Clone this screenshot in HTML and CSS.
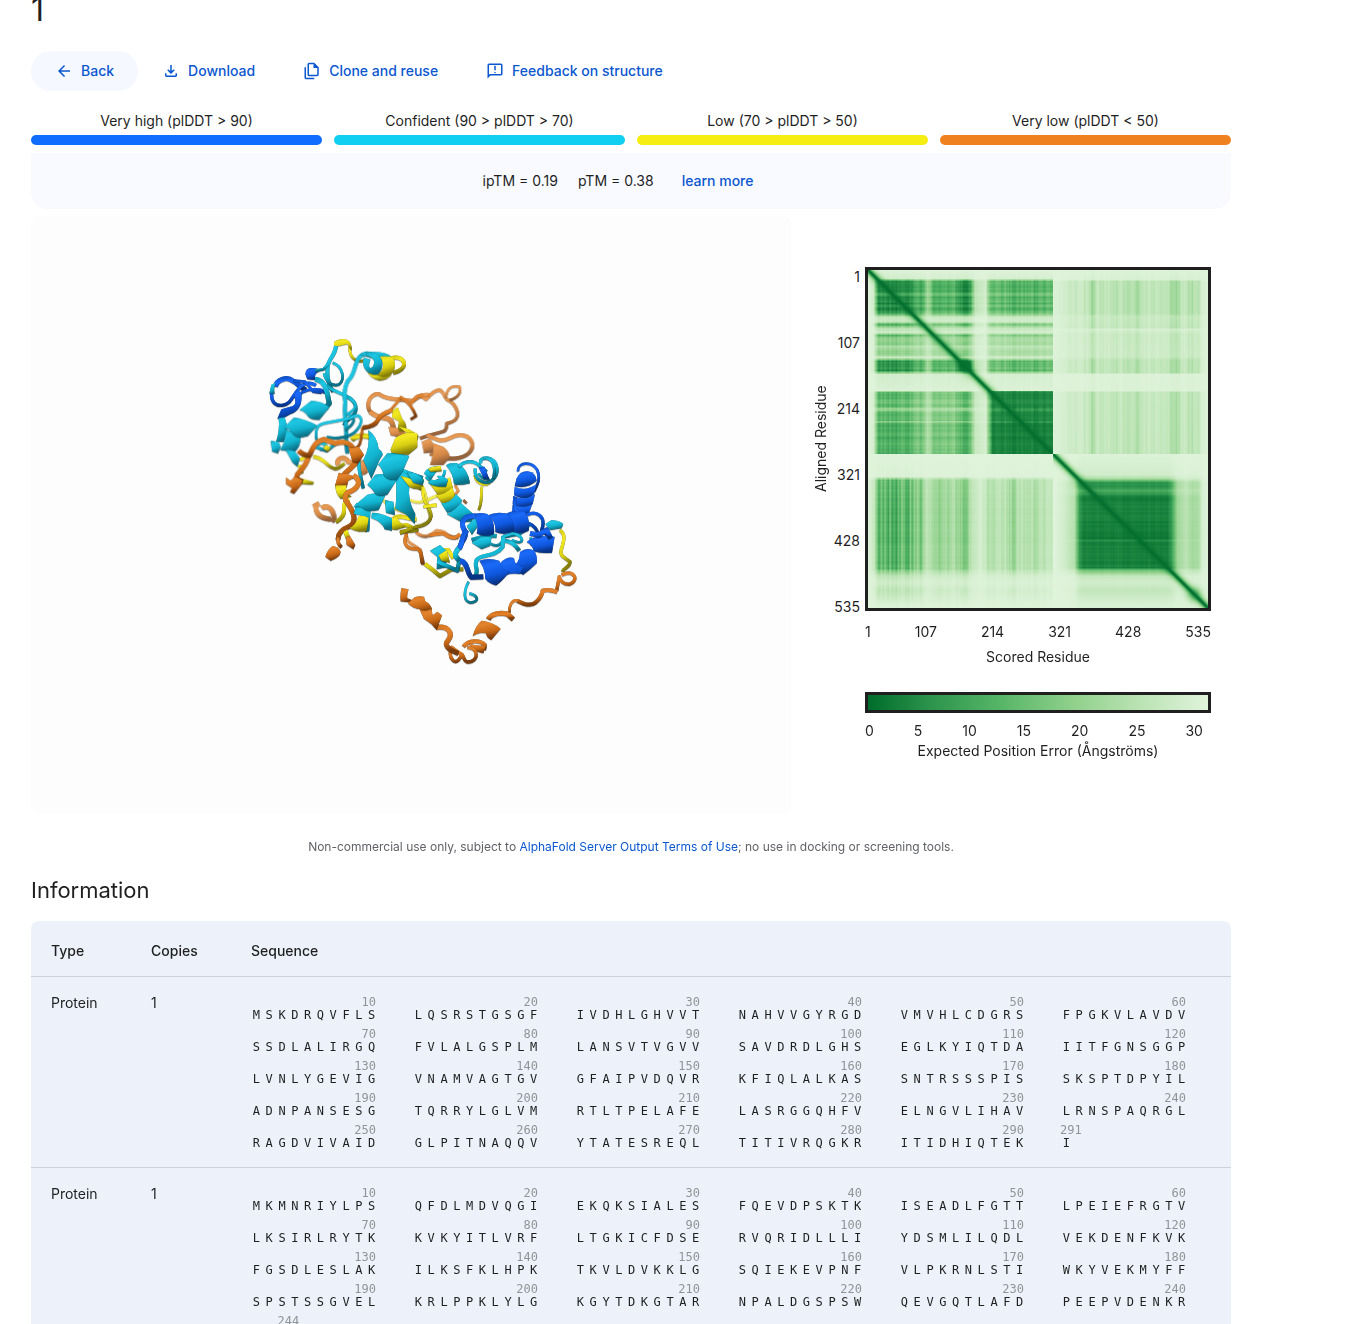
FILE: index.html
```html
<!DOCTYPE html>
<html lang="en">
<head>
<meta charset="utf-8">
<title>1 - AlphaFold Server</title>
<link rel="stylesheet" href="styles.css">
</head>
<body>
<main class="page">
  <h1 class="title">1</h1>

  <nav class="actions" aria-label="Result actions">
    <button class="action action-filled" type="button">
      <svg class="icon" viewBox="0 -960 960 960" aria-hidden="true"><path d="m313-440 224 224-57 56-320-320 320-320 57 56-224 224h487v80H313Z"/></svg>
      Back
    </button>
    <button class="action" type="button">
      <svg class="icon" viewBox="0 -960 960 960" aria-hidden="true"><path d="M480-320 280-520l56-58 104 104v-326h80v326l104-104 56 58-200 200ZM240-160q-33 0-56.5-23.5T160-240v-120h80v120h480v-120h80v120q0 33-23.5 56.5T720-160H240Z"/></svg>
      Download
    </button>
    <button class="action" type="button">
      <svg class="icon" viewBox="0 -960 960 960" aria-hidden="true"><path d="M760-200H320q-33 0-56.5-23.5T240-280v-560q0-33 23.5-56.5T320-920h280l240 240v400q0 33-23.5 56.5T760-200ZM560-640v-200H320v560h440v-360H560ZM160-40q-33 0-56.5-23.5T80-120v-560h80v560h440v80H160Z"/></svg>
      Clone and reuse
    </button>
    <button class="action" type="button">
      <svg class="icon" viewBox="0 -960 960 960" aria-hidden="true"><path d="M480-360q17 0 28.5-11.5T520-400q0-17-11.5-28.5T480-440q-17 0-28.5 11.5T440-400q0 17 11.5 28.5T480-360Zm-40-160h80v-240h-80v240ZM80-80v-720q0-33 23.5-56.5T160-880h640q33 0 56.5 23.5T880-800v480q0 33-23.5 56.5T800-240H240L80-80Zm126-240h594v-480H160v525l46-45Z"/></svg>
      Feedback on structure
    </button>
  </nav>

  <ul class="legend">
    <li class="legend-item very-high">Very high (plDDT &gt; 90)</li>
    <li class="legend-item confident">Confident (90 &gt; plDDT &gt; 70)</li>
    <li class="legend-item low">Low (70 &gt; plDDT &gt; 50)</li>
    <li class="legend-item very-low">Very low (plDDT &lt; 50)</li>
  </ul>

  <div class="scores">
    <span>ipTM = 0.19</span>
    <span>pTM = 0.38</span>
    <a class="learn" href="#learn">learn more</a>
  </div>

  <section class="results">
    <div class="viewer">
      <svg class="structure" viewBox="31 216 760 598" role="img" aria-label="Predicted protein structure">
        <defs>
          <linearGradient id="c" x1="0" y1="0" x2="0.35" y2="1"><stop offset="0" stop-color="#12a3bd"/><stop offset="0.3" stop-color="#1fc8e4"/><stop offset="0.65" stop-color="#12b3cf"/><stop offset="1" stop-color="#0a7288"/></linearGradient>
          <linearGradient id="b" x1="0" y1="0" x2="0.3" y2="1"><stop offset="0" stop-color="#0d4fca"/><stop offset="0.3" stop-color="#1b6af8"/><stop offset="0.65" stop-color="#0f58e0"/><stop offset="1" stop-color="#073386"/></linearGradient>
          <linearGradient id="y" x1="0" y1="0" x2="0.3" y2="1"><stop offset="0" stop-color="#d8ce16"/><stop offset="0.3" stop-color="#f4ea22"/><stop offset="0.65" stop-color="#d9cf12"/><stop offset="1" stop-color="#857e08"/></linearGradient>
          <linearGradient id="o" x1="0" y1="0" x2="0.3" y2="1"><stop offset="0" stop-color="#d67622"/><stop offset="0.3" stop-color="#e3832c"/><stop offset="0.65" stop-color="#c96a18"/><stop offset="1" stop-color="#7a3b0a"/></linearGradient>
        </defs>

        <!-- far strands, faded by depth -->
        <g class="ribbon far" transform="translate(260 330) scale(.3333)">
          <path class="os w14" d="M235,405C225,385 255,375 265,395L300,400L318,430"/>
          <path class="of" d="M300,390L325,392L320,430L296,440Z"/>
          <path class="os w12" d="M330,245C315,215 335,190 357,192C385,215 440,205 455,213C475,205 480,190 510,195"/>
          <path class="os w14" d="M330,245Q350,262 375,264T400,300L432,305"/>
          <path class="of" d="M385,290L438,296L430,325L392,316Z"/>
        </g>
        <g class="ribbon far" transform="translate(400 370) scale(.3333)">
          <path class="os w10" d="M30,105C45,85 50,75 62,76L78,88C95,75 95,62 118,60C130,62 130,75 140,88Q165,98 172,125T140,160Q142,182 125,186T60,205"/>
          <path class="os w8" d="M138,82C140,55 155,45 178,50C185,65 175,85 148,90"/>
          <path class="os w12" d="M80,195L115,210C150,215 150,195 180,195C215,195 225,225 210,245C195,265 160,270 120,262L90,250"/>
          <path class="of" d="M65,215L90,205Q104,222 105,245L72,250Z"/>
          <path class="of" d="M100,220L130,230Q148,244 150,262L130,285L90,285Q102,250 100,220Z"/>
          <path class="os w8" d="M165,345L175,362L160,380M190,390L200,400"/>
        </g>
        <g class="ribbon far" transform="translate(300 450) scale(.3333)">
          <path class="os w14" d="M40,170L58,160M48,165C45,195 65,205 92,208M65,175C85,160 100,180 103,205L95,215"/>
          <path class="os w8" d="M320,245Q318,272 332,280T362,300L372,345"/>
          <path class="os w10" d="M348,246C370,265 385,262 410,242Q428,242 440,252T475,262"/>
          <path class="ys w8" d="M330,150C360,165 380,150 415,135M250,150C280,190 330,175 345,215"/>
          <path class="ys w10" d="M340,90Q372,105 376,135T392,200Q388,225 345,230"/>
        </g>

        <!-- upper left lobe -->
        <g class="ribbon" transform="translate(260 330) scale(.3333)">
          <path class="ys w8" d="M268,50Q270,80 284,88T315,92"/>
          <path class="yf" d="M222,35Q236,26 250,27C268,27 277,42 275,62L262,42L238,48L222,52Z"/>
          <path class="cs w12" d="M228,48C226,75 206,85 203,110C200,140 205,165 220,185"/>
          <path class="cs w8" d="M218,98C250,108 256,150 236,164C212,170 196,150 192,130"/>
          <path class="cs w10" d="M200,165C215,190 285,190 288,235C290,260 255,270 252,285"/>
          <path class="cs w12" d="M325,70C280,72 292,120 270,145C255,160 250,190 256,215C250,250 262,290 258,330L262,370"/>
          <path class="cs w8" d="M260,200Q288,215 286,228T262,252Q285,262 280,275T255,300"/>
          <path class="cs w8" d="M170,330C162,285 180,280 210,276L270,265C306,240 312,275 290,300C275,320 230,330 200,320"/>
          <path class="cs w10" d="M165,350C190,320 215,360 180,358M165,350L200,362L235,335"/>
          <path class="ys w12" d="M392,85C440,72 448,120 400,128"/>
          <path class="yf" d="M322,126Q344,128 366,138L395,134Q380,152 358,151Q336,148 322,126Z"/>
          <path class="cf" d="M300,72Q320,62 345,66Q375,66 392,78L375,95L330,82Z"/>
          <path class="yf" d="M358,80Q380,76 398,82C412,100 404,132 384,138Q366,142 352,134C374,120 374,98 358,80Z"/>
          <path class="cf" d="M318,66C370,62 380,112 352,134C318,136 302,106 312,82L332,88C322,110 330,118 338,110C350,92 336,78 320,78Z"/>
          <path class="bs w14" d="M46,170C50,150 80,138 98,152C115,160 118,172 138,180"/>
          <path class="bs w10" d="M35,185C32,218 48,228 66,226C95,222 95,200 115,178C128,158 150,155 168,166"/>
          <path class="bs w8" d="M100,152L135,155L160,185L185,188M105,205Q125,180 160,178T190,190"/>
          <path class="bf" d="M136,132Q138,112 155,114Q175,112 178,124Q160,132 166,150L142,148Z"/>
          <path class="bf" d="M52,266L64,238L98,228C116,218 96,196 110,182L124,186C128,220 118,245 92,252L70,264Z"/>
          <path class="cf" d="M28,190L34,164L48,158Q40,170 44,192Z"/>
          <path class="cs w8" d="M165,122L190,118L205,100"/>
          <path class="cs w14" d="M165,148C202,152 200,190 208,220L195,235"/>
          <path class="cf" d="M56,264L74,262Q82,282 82,300L72,335L48,335Q60,300 56,264Z"/>
          <path class="cf" d="M76,300Q108,302 122,322Q122,350 104,366L60,360Q80,330 76,300Z"/>
          <path class="cf" d="M72,292L102,262Q135,266 172,286L144,318Q110,330 96,308Q90,296 72,292Z"/>
          <path class="cf" d="M118,240L154,212Q190,214 208,232L178,270Q150,270 142,256Q134,244 118,240Z"/>
          <path class="cf" d="M32,332L56,336L62,350L54,370L36,364Z"/>
          <path class="cf" d="M76,358Q96,358 106,366L120,385L112,410L98,398Z"/>
          <path class="ys w10" d="M120,390L145,378M118,405L126,430"/>
          <path class="yf" d="M114,442L162,456L158,464L108,460Z"/>
          <path class="os w14" d="M146,380Q138,405 118,426T128,455"/>
          <path class="of" d="M78,442L92,452L104,440L126,450L124,464L102,492L90,486L96,474L78,462Z"/>
          <path class="ys w10" d="M160,380C195,382 200,412 226,416C240,416 245,405 254,400"/>
          <path class="ys w14" d="M275,330C292,312 320,315 338,325"/>
          <path class="os w14" d="M116,362Q130,376 148,376C160,352 162,336 192,328L225,340C262,330 278,345 284,368"/>
          <path class="yf" d="M196,344L212,352L204,366L190,356Z"/>
          <path class="os w8" d="M284,355C308,350 302,310 308,294Q345,290 362,256L385,248L424,202"/>
          <path class="os w12" d="M308,292Q345,292 354,270T398,240"/>
          <path class="os w8" d="M420,200Q440,212 450,225T468,258L452,268"/>
          <path class="yf" d="M398,240L414,232Q420,250 428,268Q442,282 438,300L420,306Q410,292 418,274L396,262Z"/>
          <path class="yf" d="M415,290Q450,292 476,318L472,330L450,316Z"/>
        </g>

        <!-- centre -->
        <g class="ribbon" transform="translate(300 450) scale(.3333)">
          <path class="ys w12" d="M282,205C300,190 330,210 350,208M285,230L320,225L350,240L300,246"/>
          <path class="cs w10" d="M175,20L178,60L190,115M185,5C165,15 168,35 180,42"/>
          <path class="cf" d="M205,-60Q232,-40 236,-4Q248,4 248,14Q236,30 230,50L214,86L190,30Q212,-10 205,-60Z"/>
          <path class="yf" d="M262,205L290,200Q300,222 318,228L290,240L276,238Z"/>
          <path class="cf" d="M216,188Q246,188 276,205L276,242L254,238Q246,214 214,204Z"/>
          <path class="cf" d="M255,150L280,155L285,195L258,188Z"/>
          <path class="yf" d="M310,70Q345,76 372,88L362,122Q348,108 332,102Z"/>
          <path class="cf" d="M282,46Q320,62 370,78L366,98L330,90Q300,78 282,46Z"/>
          <path class="cf" d="M282,52Q306,60 312,66Q330,80 328,110Q322,150 346,192L344,222Q328,204 318,192L286,176Q294,110 282,52Z"/>
          <path class="os w14" d="M176,8Q178,34 150,56T112,110"/>
          <path class="of" d="M146,-5L176,-10L192,14L174,40L158,36Z"/>
          <path class="of" d="M106,104L116,68L142,72L168,80L145,92L140,112Z"/>
          <path class="yf" d="M106,106L140,106Q132,124 155,140L122,146Q106,130 106,106Z"/>
          <path class="ys w12" d="M148,148Q130,155 132,178T108,216"/>
          <path class="os w14" d="M160,76C190,95 172,118 142,128Q132,140 138,152C165,190 170,215 150,228C125,238 112,250 115,270"/>
          <path class="yf" d="M130,246L142,238L150,260L138,268Z"/>
          <path class="of" d="M138,262L150,258L166,285L160,298L140,284Z"/>
          <path class="os w10" d="M115,262Q110,280 125,292"/>
          <path class="of" d="M76,320Q82,298 98,288Q118,290 122,306Q120,322 92,332Z"/>
          <path class="cf" d="M168,160Q196,160 212,176L208,244L196,246L182,196L162,192Z"/>
          <path class="yf" d="M176,198Q194,196 206,204L200,244Q170,248 148,234Q166,228 176,198Z"/>
          <path class="cf" d="M166,164L202,134Q232,124 256,136L236,180Q200,188 188,174Q180,166 160,172Z"/>
          <path class="cf" d="M202,104L226,74Q262,68 294,84L262,134Q232,142 224,128Q216,114 202,104Z"/>
          <path class="cf" d="M234,44L262,10Q298,6 328,18L308,64L290,90Q258,92 250,72Q246,52 234,44Z"/>
          <path class="yf" d="M272,-2L286,-36Q318,-58 352,-50L352,-8L325,14Q298,12 275,8Z"/>
        </g>

        <!-- right middle helix and small rings -->
        <g class="ribbon" transform="translate(400 370) scale(.3333)">
          <path class="yf" d="M2,318Q40,326 70,345L65,358Q40,358 28,350Z"/>
          <path class="cf" d="M20,305Q50,305 72,330L68,346L40,338Z"/>
          <path class="ys w8" d="M68,350Q66,385 80,404T94,438Q88,468 40,472"/>
          <path class="ys w10" d="M0,490L35,475M70,410L110,405"/>
          <path class="cf" d="M72,310Q80,288 122,288L108,306L92,330Z"/>
          <path class="yf" d="M84,296Q100,286 122,288L125,304L92,306Z"/>
          <path class="cs w8" d="M78,320C90,340 130,342 135,300"/>
          <path class="yf" d="M84,334Q120,340 150,322L158,350L154,372Q130,384 118,380Z"/>
          <path class="cf" d="M84,338Q100,352 138,350L144,330Q130,314 110,318Q130,332 92,330Z"/>
          <path class="yf" d="M108,376Q140,372 156,352Q168,372 162,392Q140,404 128,402Z"/>
          <path class="cf" d="M124,400Q152,400 168,372L186,390Q180,412 172,420L142,428Z"/>
          <path class="cf" d="M140,432Q168,420 182,398L220,432L216,455L184,456Q166,446 140,432Z"/>
          <path class="cf" d="M138,286Q150,276 172,280Q204,296 210,340Q176,348 162,342Q160,310 138,286Z"/>
          <path class="cs w10" d="M175,290C195,270 222,270 240,288L260,305"/>
          <path class="ys w8" d="M224,315C230,345 260,350 270,335M246,350C240,375 250,390 236,420"/>
          <path class="cs w10" d="M226,295C222,330 250,345 275,332C300,312 296,270 262,264C245,262 238,272 244,280"/>
          <path class="cs w8" d="M250,265C285,262 286,300 280,325M236,310C242,325 258,330 268,325"/>
          <path class="bf" d="M236,292L254,290L268,328L252,326Z"/>
        </g>

        <!-- blue domain -->
        <g class="ribbon" transform="translate(400 370) scale(.3333)">
          <path class="cs w12" d="M215,510C245,500 270,495 290,498M310,500L360,490L390,460"/>
          <path class="bs w8" d="M354,304C352,276 395,272 412,300C422,325 414,342 402,365"/>
          <path class="bf" d="M350,325Q360,302 384,304Q408,308 410,332Q380,358 344,348Z"/>
          <path class="bf" d="M344,350Q376,366 410,342L402,372Q380,396 342,375Z"/>
          <path class="bf" d="M340,378Q376,394 405,372L398,402Q376,424 338,402Z"/>
          <path class="bf" d="M338,404Q370,416 396,404L386,432Q356,446 336,428Z"/>
          <path class="bs w10" d="M345,380C340,410 350,440 380,450M380,435C410,420 440,440 425,480L448,500M386,460Q410,470 415,495"/>
          <path class="bf" d="M318,432Q332,420 372,424Q392,446 386,482Q360,496 334,484Q344,456 318,432Z"/>
          <path class="bf" d="M264,436Q286,424 318,430Q346,448 340,486Q310,496 286,486Q290,456 264,436Z"/>
          <path class="bf" d="M208,438Q232,424 262,432Q286,450 282,492Q252,504 230,490Q240,456 208,438Z"/>
          <path class="bs w14" d="M226,438C198,436 178,450 192,478C205,500 185,510 180,530"/>
          <path class="cf" d="M200,468L225,445Q234,462 230,474L216,494Z"/>
          <path class="cf" d="M436,462L455,450Q480,452 490,462L485,475L450,480Z"/>
        </g>

        <!-- lower domain and tail -->
        <g class="ribbon" transform="translate(380 530) scale(.3333)">
          <path class="ys w10" d="M540,0C560,15 550,35 545,55C535,80 560,85 570,95C570,115 550,112 548,125"/>
          <path class="cf" d="M275,38L305,20L335,22L330,48L305,58Z"/>
          <path class="cs w8" d="M330,40C355,55 370,40 368,20L400,10M400,10C440,20 430,50 395,30M452,22L455,45"/>
          <path class="cs w12" d="M370,20L368,50C345,85 300,70 290,90C280,110 300,120 285,138"/>
          <path class="cs w12" d="M375,32Q400,34 418,62"/>
          <path class="ys w12" d="M135,102Q160,120 180,138L215,118L250,118M160,60L205,60L220,85"/>
          <path class="cf" d="M150,62L180,45L200,62L198,112L170,118L172,80Z"/>
          <path class="cs w12" d="M172,95L232,122L238,90L225,75"/>
          <path class="yf" d="M176,76L200,60L210,98L184,92Z"/>
          <path class="cs w14" d="M240,50Q222,68 228,80L238,92"/>
          <path class="bs w14" d="M262,0C240,20 250,40 238,55M240,92C265,95 260,130 275,142L310,140"/>
          <path class="bf" d="M440,36Q460,20 482,18L524,20L516,68Q484,72 462,64Q458,46 440,36Z"/>
          <path class="bf" d="M420,66Q440,50 464,62Q474,84 470,100Q450,120 430,134L388,116Q420,104 420,66Z"/>
          <path class="bf" d="M360,100Q380,78 402,84Q404,108 430,112L420,132Q400,128 380,134Q370,150 348,166L322,142Q356,130 360,100Z"/>
          <path class="bf" d="M298,92Q326,82 358,92Q362,120 390,126Q372,142 348,166Q326,160 316,146Q316,116 298,92Z"/>
          <path class="bs w14" d="M450,10L475,15L500,0L512,25"/>
          <path class="cs w8" d="M266,155C250,185 250,215 272,218C302,215 292,195 268,190"/>
          <path class="os w10" d="M80,12C65,45 85,60 112,56C130,65 120,85 128,102M150,15L190,10C215,28 225,28 240,12"/>
          <path class="os w10" d="M545,135C580,115 600,150 570,162C550,165 540,150 538,140L530,182"/>
          <path class="os w12" d="M532,186Q505,176 488,182Q484,204 466,218T412,212"/>
          <path class="os w8" d="M415,212C395,208 388,225 388,248"/>
          <path class="os w14" d="M325,268C335,248 365,248 382,252L400,268"/>
          <path class="of" d="M278,318Q288,284 305,272Q340,276 362,296L334,330Q320,324 318,310Q300,304 278,318Z"/>
          <path class="os w12" d="M250,350C265,330 300,328 315,345L312,360"/>
          <path class="of" d="M266,340Q290,350 318,345L310,370L282,362Z"/>
          <path class="os w10" d="M262,352C300,355 295,395 265,396C245,395 258,375 240,370L215,352Q205,375 218,390T248,370"/>
          <path class="os w14" d="M168,292C205,285 220,310 205,330C190,345 205,360 235,370"/>
          <path class="of" d="M64,174L86,178Q80,190 82,205Q96,208 100,218L62,214Q60,196 64,174Z"/>
          <path class="of" d="M84,220L104,202Q118,196 132,200L136,214Q152,222 156,238L148,252Q128,250 120,238Q100,236 84,220Z"/>
          <path class="of" d="M120,240Q140,246 154,236L158,256L172,245L186,256L170,300L154,282L132,266Z"/>
        </g>
      </svg>
    </div>

    <div class="pae">
      <div class="plot">
        <div class="y-title">Aligned Residue</div>
        <div class="y-ticks"><span>1</span><span>107</span><span>214</span><span>321</span><span>428</span><span>535</span></div>
        <canvas class="heatmap" id="heatmap" width="340" height="338" aria-label="Predicted aligned error"></canvas>
        <div class="x-axis">
          <div class="ticks"><span>1</span><span>107</span><span>214</span><span>321</span><span>428</span><span>535</span></div>
          <div class="axis-title">Scored Residue</div>
          <div class="scale"></div>
          <div class="ticks scale-ticks"><span>0</span><span>5</span><span>10</span><span>15</span><span>20</span><span>25</span><span>30</span></div>
          <div class="axis-title">Expected Position Error (Ångströms)</div>
        </div>
      </div>
    </div>
  </section>

  <p class="notice">Non-commercial use only, subject to <a href="#terms">AlphaFold Server Output Terms of Use</a>; no use in docking or screening tools.</p>

  <h2 class="subtitle">Information</h2>
  <table class="entities">
    <thead>
      <tr><th class="narrow">Type</th><th class="narrow">Copies</th><th>Sequence</th></tr>
    </thead>
    <tbody>
      <tr>
        <td>Protein</td><td>1</td>
        <td><div class="sequence" data-length="291">MSKDRQVFLS LQSRSTGSGF IVDHLGHVVT NAHVVGYRGD VMVHLCDGRS FPGKVLAVDV SSDLALIRGQ FVLALGSPLM LANSVTVGVV SAVDRDLGHS EGLKYIQTDA IITFGNSGGP LVNLYGEVIG VNAMVAGTGV GFAIPVDQVR KFIQLALKAS SNTRSSSPIS SKSPTDPYIL ADNPANSESG TQRRYLGLVM RTLTPELAFE LASRGGQHFV ELNGVLIHAV LRNSPAQRGL RAGDVIVAID GLPITNAQQV YTATESREQL TITIVRQGKR ITIDHIQTEK I</div></td>
      </tr>
      <tr>
        <td>Protein</td><td>1</td>
        <td><div class="sequence" data-length="244">MKMNRIYLPS QFDLMDVQGI EKQKSIALES FQEVDPSKTK ISEADLFGTT LPEIEFRGTV LKSIRLRYTK KVKYITLVRF LTGKICFDSE RVQRIDLLLI YDSMLILQDL VEKDENFKVK FGSDLESLAK ILKSFKLHPK TKVLDVKKLG SQIEKEVPNF VLPKRNLSTI WKYVEKMYFF SPSTSSGVEL KRLPPKLYLG KGYTDKGTAR NPALDGSPSW QEVGQTLAFD PEEPVDENKR</div></td>
      </tr>
    </tbody>
  </table>
</main>
<script src="script.js"></script>
</body>
</html>
```
FILE: styles.css
```css
* {
  box-sizing: border-box;
}

body {
  margin: 0;
  background: #fff;
  color: #1f1f1f;
  font: 14px/20px Inter, "Liberation Sans", sans-serif;
}

a {
  color: #0b57d0;
  text-decoration: none;
}

.page {
  height: 100vh;
  overflow-y: auto;
  scrollbar-width: none;
  padding: 0 31px;
}

.page > * {
  max-width: 1200px;
}

.title {
  margin: 0 0 31px;
  font-size: 32px;
  line-height: 20px;
  font-weight: 400;
}

.actions {
  display: flex;
  flex-wrap: wrap;
}

.action {
  display: flex;
  align-items: center;
  gap: 8px;
  height: 40px;
  padding: 0 24px;
  border: 0;
  border-radius: 20px;
  background: none;
  color: #0b57d0;
  font: inherit;
  font-weight: 500;
  cursor: pointer;
}

.action-filled {
  background: #f5f8ff;
}

.icon {
  width: 18px;
  height: 18px;
  fill: currentColor;
}

.legend {
  display: grid;
  grid-template-columns: repeat(4, 1fr);
  gap: 12px;
  margin: 20px 0 8px;
  padding: 0;
  list-style: none;
  text-align: center;
}

.legend-item::after {
  content: "";
  display: block;
  height: 10px;
  margin-top: 4px;
  border-radius: 5px;
  background: var(--level);
}

.very-high { --level: #106dff; }
.confident { --level: #10cff1; }
.low { --level: #f6ed12; }
.very-low { --level: #ef821e; }

.scores {
  display: flex;
  justify-content: center;
  gap: 20px;
  padding: 18px 26px 18px 0;
  border-radius: 0 0 16px 16px;
  background: #f8faff;
}

.learn {
  margin-left: 8px;
  font-weight: 500;
}

.results {
  display: grid;
  grid-template-columns: 19fr 11fr;
  margin-top: 7px;
}

.viewer {
  background: #fdfdfd;
  border-radius: 8px;
}

.structure {
  display: block;
  width: 100%;
}

.ribbon path {
  fill: none;
  stroke-linejoin: round;
  filter: drop-shadow(0 1px 1px rgba(0, 0, 0, .7));
}

.far { opacity: .8; }

.ribbon .cs { stroke: url(#c); }
.ribbon .bs { stroke: url(#b); }
.ribbon .ys { stroke: url(#y); }
.ribbon .os { stroke: url(#o); }
.ribbon .cf { fill: url(#c); }
.ribbon .bf { fill: url(#b); }
.ribbon .yf { fill: url(#y); }
.ribbon .of { fill: url(#o); }
.w8 { stroke-width: 8px; }
.w10 { stroke-width: 10px; }
.w12 { stroke-width: 12px; }
.w14 { stroke-width: 15px; }

.pae {
  padding: 51px 20px 0 22px;
}

.plot {
  display: grid;
  grid-template-columns: 16px 31px 1fr;
}

.y-title {
  writing-mode: vertical-rl;
  transform: rotate(180deg);
  text-align: center;
  line-height: 16px;
}

.y-ticks {
  display: flex;
  flex-direction: column;
  justify-content: space-between;
  margin-bottom: -6px;
  text-align: right;
}

.heatmap {
  display: block;
  width: calc(100% - 5px);
  margin-left: 5px;
  border: 3px solid #1f1f1f;
}

.x-axis {
  grid-column: 3;
  margin-left: 5px;
  padding-top: 11px;
}

.ticks {
  display: flex;
  justify-content: space-between;
}

.axis-title {
  margin-top: 5px;
  text-align: center;
}

.scale {
  height: 21px;
  margin: 25px 0 8px;
  border: 3px solid #1f1f1f;
  background: linear-gradient(90deg, #006d2c, #2b934b 18%, #54b466 38%, #8fd08b 60%, #bae3b3 80%, #e0f3db);
}

.scale-ticks {
  padding-right: 8px;
}

.scale-ticks + .axis-title {
  margin-top: 0;
}

.notice {
  margin: 23px 0 19px;
  color: #5f6368;
  font-size: 12px;
  text-align: center;
}

.subtitle {
  margin: 0 0 17px;
  font-size: 22px;
  line-height: 28px;
  font-weight: 400;
}

.entities {
  width: 100%;
  border-spacing: 0;
  border-radius: 8px 8px 0 0;
  background: #edf2fa;
  text-align: left;
}

.entities th {
  padding: 20px 0 15px 20px;
  font-weight: 500;
}

.entities .narrow {
  width: 100px;
}

.entities td {
  padding: 16px 0 17px 20px;
  border-top: 1px solid #cbd2de;
  vertical-align: top;
}

.sequence {
  display: grid;
  grid-template-columns: repeat(6, 128px);
  gap: 5px 34px;
  margin: 2px 0 0 -1px;
  font: 12px/13px "DejaVu Sans Mono", "Liberation Mono", monospace;
}

.block {
  display: grid;
  grid-template-columns: repeat(10, minmax(0, 1fr));
  text-align: center;
}

.position {
  padding-right: 2px;
  color: #909499;
  line-height: 14px;
  text-align: right;
}

.residue {
  grid-row: 2;
  height: 13px;
}
```
FILE: script.js
```js
// Sequence blocks: ten residues each, numbered above the last one.
document.querySelectorAll('.sequence').forEach((box) => {
  const residues = box.textContent.replace(/\s/g, '');
  const total = Number(box.dataset.length);
  box.textContent = '';
  for (let start = 0; start < total; start += 10) {
    const end = Math.min(start + 10, total);
    const block = document.createElement('div');
    block.className = 'block';
    const position = document.createElement('span');
    position.className = 'position';
    position.style.gridColumn = '1 / ' + (end - start + 1);
    position.textContent = end;
    block.append(position);
    for (let i = start; i < end; i++) {
      const residue = document.createElement('span');
      residue.className = 'residue';
      residue.textContent = residues[i] || '';
      block.append(residue);
    }
    box.append(block);
  }
});

// Predicted aligned error map.
const canvas = document.getElementById('heatmap');
const ctx = canvas.getContext('2d');
const W = canvas.width, H = canvas.height, SPLIT_X = 185, SPLIT_Y = 184;

// Piecewise-linear profile through [position, value] pairs.
function profile(points, size) {
  const out = new Float32Array(size);
  let k = 0;
  for (let i = 0; i < size; i++) {
    while (k < points.length - 2 && i >= points[k + 1][0]) k++;
    const [x0, v0] = points[k], [x1, v1] = points[k + 1];
    out[i] = v0 + (v1 - v0) * Math.min(1, (i - x0) / Math.max(1, x1 - x0));
  }
  return out;
}

let seed = 7;
function random() {
  seed = (seed * 16807) % 2147483647;
  return seed / 2147483647;
}
function stripes(size) {
  const raw = Array.from({ length: size + 2 }, random);
  return Array.from({ length: size }, (_, i) => (raw[i] + raw[i + 1]) - 1);
}
const noiseX = stripes(W), noiseY = stripes(H);

const rowTop = profile([[0,.02],[8,.08],[11,.85],[21,.85],[24,.6],[27,.85],[42,.82],[47,.14],[51,.15],[54,.62],[58,.2],[62,.08],[65,.58],[69,.35],[74,.45],[76,.28],[83,.45],[87,.12],[91,.78],[100,.82],[104,.08],[120,.03],[122,.58],[136,.56],[138,.32],[140,.4],[142,.6],[150,.58],[151,.4],[153,.64],[184,.66]], H);
const colTop = profile([[0,0],[5,.1],[10,1],[43,1],[47,.78],[55,.8],[59,.4],[62,.5],[65,.74],[86,.75],[91,.95],[102,.98],[107,.2],[117,.1],[122,.65],[150,.72],[185,.68]], W);
const rowRight = profile([[0,.02],[9,.05],[11,.25],[43,.25],[46,.16],[57,.19],[59,.07],[64,.15],[86,.13],[90,.23],[102,.23],[104,.03],[120,.03],[122,.2],[184,.21]], H);
const colRight = profile([[0,0],[185,.1],[195,.3],[208,.5],[220,.7],[224,1.3],[228,.7],[246,.8],[249,1.3],[252,.7],[266,.9],[269,1.2],[273,.6],[300,.65],[303,1.4],[310,1.1],[314,.6],[322,1],[330,.8],[334,.2],[340,.05]], W);
const rowLow = profile([[0,0],[184,.01],[206,.05],[210,.9],[250,1],[298,.95],[301,.6],[306,.28],[312,.14],[320,.3],[326,.2],[334,.05],[338,.03]], H);
const colLow = profile([[0,.02],[6,.15],[10,.58],[44,.6],[46,.46],[54,.46],[58,.2],[64,.26],[70,.36],[85,.3],[92,.42],[102,.34],[106,.15],[112,.06],[120,.22],[128,.23],[132,.18],[145,.32],[150,.2],[165,.24],[185,.14]], W);
const rowBlock = profile([[0,0],[184,.02],[204,.08],[208,.25],[212,.8],[216,.82],[220,.68],[224,.78],[226,.92],[240,.88],[256,.93],[268,.94],[270,.82],[273,.93],[290,.9],[297,.92],[300,.5],[306,.14],[312,.08],[320,.16],[334,.04]], H);
const colBlock = profile([[0,0],[185,0],[195,.08],[206,.25],[211,.88],[214,1],[299,1],[303,.85],[309,.35],[318,.22],[324,.34],[330,.3],[334,.06],[340,0]], W);

function bump(x, y, cx, cy, size) {
  return Math.exp(-((x - cx) ** 2 + (y - cy) ** 2) / (size * size));
}

function darkness(x, y) {
  const left = x < SPLIT_X, top = y < SPLIT_Y;
  let d, distance = 99;
  if (left && top) {
    d = rowTop[y] * colTop[x];
    if (y > 120 && x > 117) d = Math.min(1, (x - 117) / 7) * (.58 + rowTop[y] * .5);
    d += .3 * bump(x, y, 97, 95, 8);
    d += (noiseX[x] * .1 + noiseY[y] * .08) * Math.min(1, d * 2) * (d > .85 ? .5 : 1);
    distance = Math.abs(x - y * SPLIT_X / SPLIT_Y);
  } else if (top) {
    d = rowRight[y] * colRight[x] * (1 + noiseX[x] * .35);
  } else if (left) {
    d = rowLow[y] * colLow[x] * (1 + noiseX[x] * .4 + noiseY[y] * .06);
  } else {
    d = rowBlock[y] * colBlock[x] * (1 + noiseY[y] * .04 + noiseX[x] * .03);
    d += .45 * bump(x, y, 326, 324, 7);
    distance = Math.abs((x - SPLIT_X) - (y - SPLIT_Y) * (W - SPLIT_X) / (H - SPLIT_Y));
  }
  const line = Math.exp(-distance * distance / 8);
  const halo = .55 * Math.exp(-distance * distance / 40);
  return 1 - (1 - Math.min(.97, d)) * (1 - line) * (1 - halo);
}

const ramp = [[0,224,243,219],[.2,186,227,179],[.4,143,208,139],[.62,84,180,102],[.82,43,147,75],[1,4,112,47]];
function colour(v) {
  v = Math.max(0, Math.min(1, v));
  let k = 0;
  while (k < ramp.length - 2 && v > ramp[k + 1][0]) k++;
  const a = ramp[k], b = ramp[k + 1], t = (v - a[0]) / (b[0] - a[0]);
  return [1, 2, 3].map((i) => a[i] + (b[i] - a[i]) * t);
}

const image = ctx.createImageData(W, H);
for (let y = 0; y < H; y++) {
  for (let x = 0; x < W; x++) {
    const at = (y * W + x) * 4, rgb = colour(darkness(x, y));
    image.data[at] = rgb[0];
    image.data[at + 1] = rgb[1];
    image.data[at + 2] = rgb[2];
    image.data[at + 3] = 255;
  }
}
ctx.putImageData(image, 0, 0);
```
